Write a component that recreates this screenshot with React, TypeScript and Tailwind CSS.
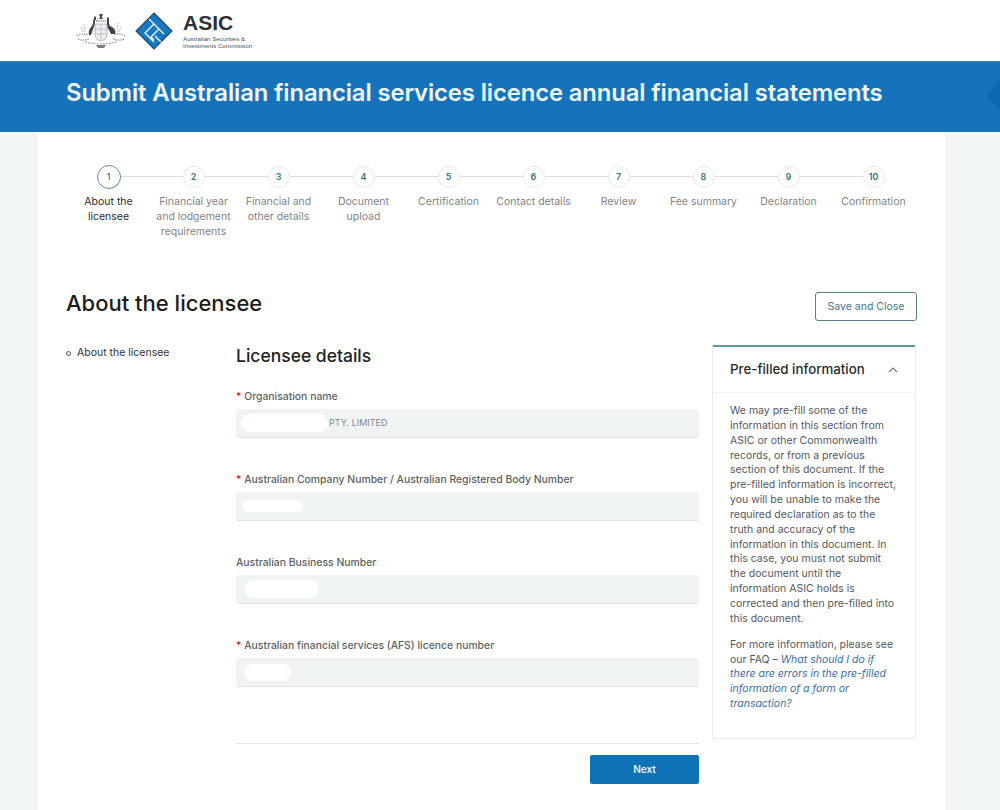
const STEPS = [
  { n: 1, lines: ["About the", "licensee"] },
  { n: 2, lines: ["Financial year", "and lodgement", "requirements"] },
  { n: 3, lines: ["Financial and", "other details"] },
  { n: 4, lines: ["Document", "upload"] },
  { n: 5, lines: ["Certification"] },
  { n: 6, lines: ["Contact details"] },
  { n: 7, lines: ["Review"] },
  { n: 8, lines: ["Fee summary"] },
  { n: 9, lines: ["Declaration"] },
  { n: 10, lines: ["Confirmation"] },
];

// blank = the white smudge covering the redacted value
const FIELDS = [
  { label: "Organisation name", required: true, value: "PTY. LIMITED", blank: "ml-[5px] h-[18px] w-[87px]" },
  { label: "Australian Company Number / Australian Registered Body Number", required: true, value: "", blank: "ml-[6px] h-[12px] w-[61px]" },
  { label: "Australian Business Number", required: false, value: "", blank: "ml-[8px] h-[18px] w-[75px]" },
  { label: "Australian financial services (AFS) licence number", required: true, value: "", blank: "ml-[8px] h-[17px] w-[47px]" },
];

const PREFILL_LINES = [
  "We may pre-fill some of the",
  "information in this section from",
  "ASIC or other Commonwealth",
  "records, or from a previous",
  "section of this document. If the",
  "pre-filled information is incorrect,",
  "you will be unable to make the",
  "required declaration as to the",
  "truth and accuracy of the",
  "information in this document. In",
  "this case, you must not submit",
  "the document until the",
  "information ASIC holds is",
  "corrected and then pre-filled into",
  "this document.",
];

function CoatOfArms() {
  return (
    <svg width="50" height="37" viewBox="0 0 50 37" className="shrink-0">
      {/* wattle spray and motto */}
      <path d="M1 24c3-2 7-3 11-1M49 24c-3-2-7-3-11-1M2 27c4 2 7 1 11 0M48 27c-4 2-7 1-11 0" fill="none" stroke="#9a9ea2" strokeWidth="1.5" strokeDasharray="1.4 1" />
      <path d="M5 15l2 5 3-2M8 12l1 6M45 15l-2 5-3-2M42 11l-1 7" fill="none" stroke="#b4b8bb" strokeWidth="1" strokeDasharray="1.5 0.8" />
      <path d="M9 30c6 1 10 2 16 2s10-1 16-2" fill="none" stroke="#a5a9ad" strokeWidth="1.2" strokeDasharray="2 1" />
      {/* kangaroo */}
      <path d="M13 23c-1-4 1-7 3-9 1-2 1-5 2-8l1-2 1 1 0 2-1 2c0 3-1 6-2 8l-2 6z" fill="#3f4348" />
      {/* emu */}
      <path d="M39 22c1-3 0-5-3-7-2-1-3-2-3-4V6l-1-1-1 1 0 6c0 3 1 5 2 6l2 4z" fill="#3f4348" />
      {/* shield */}
      <path d="M19 12h12v10c0 4-3 6-6 7-3-1-6-3-6-7z" fill="#eceeef" stroke="#8a8e92" strokeWidth="0.6" />
      <path d="M19 17h12M19 22h12M25 12v16" stroke="#9a9ea2" strokeWidth="0.5" />
      <path d="M23 2h4l-1 3 1 2h-4l1-2z" fill="#4c5055" />
      <path d="M20 9h10" stroke="#8c9095" strokeWidth="1.4" strokeDasharray="1.5 0.8" />
      <path d="M20 33h10l-2 3h-6z" fill="#7b7f84" />
    </svg>
  );
}

function AsicDiamond() {
  return (
    <svg width="38" height="38" viewBox="0 0 38 38" className="shrink-0">
      <path d="M19 1l18 18-18 18L1 19z" fill="#1878c2" stroke="#1d4a6e" strokeWidth="1.1" />
      <path d="M14 7l15 15M19 12l-9 9 9 9M24 17l-8 8M19 22l-3 3 3 3M20 24l6 6" fill="none" stroke="#eaf6fc" strokeWidth="1.4" />
    </svg>
  );
}

export default function App() {
  return (
    <div className="h-[810px] w-[1000px] overflow-hidden bg-[#f2f6f5] font-['Inter',sans-serif] text-[#333]">
      <header className="flex h-[61px] items-center bg-white pl-[76px]">
        <CoatOfArms />
        <div className="ml-[9px]"><AsicDiamond /></div>
        <div className="ml-[10px] font-['Liberation_Sans',sans-serif]">
          <div className="text-[21px] leading-[20px] font-bold text-[#2d3138]">ASIC</div>
          <div className="mt-[2px] text-[6.2px] leading-[7px] text-[#4b4f55]">Australian Securities &amp;</div>
          <div className="text-[6.2px] leading-[7px] text-[#4b4f55]">Investments Commission</div>
        </div>
      </header>

      <div className="relative flex h-[71px] items-center overflow-hidden border-t border-[#2a86c8] bg-[#1573bb] pb-[8px] pl-[66px]">
        <h1 className="text-[23.8px] font-semibold tracking-[-0.1px] text-[#eef6fb]">
          Submit Australian financial services licence annual financial statements
        </h1>
        <div className="absolute top-[19px] right-[-20px] size-[28px] rotate-45 bg-[#0d68b0]" />
      </div>

      <main className="ml-[38px] h-[678px] w-[907px] bg-white">
        <ol className="flex pt-[33px] pl-[28px]">
          {STEPS.map((step, i) => (
            <li key={step.n} className="relative flex w-[85px] flex-col items-center">
              {i < STEPS.length - 1 && (
                <div className="absolute top-[11px] left-[42px] h-px w-[85px] bg-[#dcdedf]" />
              )}
              <div
                className={
                  step.n === 1
                    ? "relative z-10 flex size-[24px] items-center justify-center rounded-full border border-[#5f8f96] bg-white text-[9px] font-medium text-[#4d6d72]"
                    : "relative z-10 mt-px mb-px flex size-[22px] items-center justify-center rounded-full border border-[#e6eaea] bg-white text-[9px] font-semibold text-[#3d7480]"
                }
              >
                {step.n}
              </div>
              <div className={step.n === 1 ? "mt-[5px] text-center text-[10.5px] leading-[15px] text-[#2b2b2b]" : "mt-[5px] text-center text-[10.5px] leading-[15px] text-[#7f8384]"}>
                {step.lines.map((line) => (
                  <div key={line} className="whitespace-nowrap">{line}</div>
                ))}
              </div>
            </li>
          ))}
        </ol>

        <div className="mt-[49px] flex items-start justify-between pr-[28px] pl-[28px]">
          <h2 className="text-[22px] leading-[30px] font-medium text-[#1c1c1c]">About the licensee</h2>
          <button className="mt-[4px] h-[29px] w-[102px] rounded-[3px] border border-[#5f7f86] bg-white text-[10.5px] text-[#3f7b88]">
            Save and Close
          </button>
        </div>

        <div className="mt-[24px] flex items-start pl-[28px]">
          <div className="flex w-[170px] shrink-0 items-center pt-[1px] text-[10.5px] leading-[14px] text-[#2f2f2f]">
            <span className="mr-[6px] size-[5px] rounded-full border border-[#555]" />
            About the licensee
          </div>

          <div className="w-[463px] shrink-0">
            <h3 className="text-[17.5px] leading-[22px] font-medium text-[#222]">Licensee details</h3>
            <div className="mt-[23px] flex flex-col gap-[35px]">
              {FIELDS.map((field) => (
                <div key={field.label}>
                  <label className="block text-[10.4px] leading-[14px] font-medium text-[#5c5f62]">
                    {field.required && <span className="text-[#c0272d]">* </span>}
                    {field.label}
                  </label>
                  <div className="mt-[5px] flex h-[29px] items-center rounded-[3px] border-b border-[#dfe3e3] bg-[#f0f3f3] text-[9px] text-[#85898b]">
                    <span className={`${field.blank} rounded-full bg-white`} />
                    {field.value && <span className="ml-[1px]">{field.value}</span>}
                  </div>
                </div>
              ))}
            </div>
            <div className="mt-[56px] border-t border-[#e3e5e5] pt-[11px] text-right">
              <button className="h-[29px] w-[109px] rounded-[2px] bg-[#0f72b5] text-[10px] font-semibold text-[#e8f3fa]">
                Next
              </button>
            </div>
          </div>

          <aside className="ml-[13px] h-[394px] w-[204px] shrink-0 rounded-[2px] border border-t-2 border-[#e9ebeb] border-t-[#5b98a3] bg-white">
            <div className="flex h-[46px] items-center justify-between border-b border-[#f0f1f1] pr-[17px] pl-[17px]">
              <span className="text-[13.3px] font-medium text-[#2a2a2a]">Pre-filled information</span>
              <svg width="10" height="6" viewBox="0 0 10 6" fill="none" stroke="#5f7f86" strokeWidth="1.2">
                <path d="M1 5l4-4 4 4" />
              </svg>
            </div>
            <div className="px-[17px] pt-[11px] text-[10.5px] leading-[14.85px] text-[#55585a]">
              {PREFILL_LINES.map((line) => (
                <div key={line} className="whitespace-nowrap">{line}</div>
              ))}
              <div className="mt-[11px] whitespace-nowrap">For more information, please see</div>
              <div className="whitespace-nowrap">
                our FAQ – <em className="text-[#3b6ea5]">What should I do if</em>
              </div>
              <div className="whitespace-nowrap text-[#3b6ea5] italic">there are errors in the pre-filled</div>
              <div className="whitespace-nowrap text-[#3b6ea5] italic">information of a form or</div>
              <div className="whitespace-nowrap text-[#3b6ea5] italic">transaction?</div>
            </div>
          </aside>
        </div>
      </main>
    </div>
  );
}
